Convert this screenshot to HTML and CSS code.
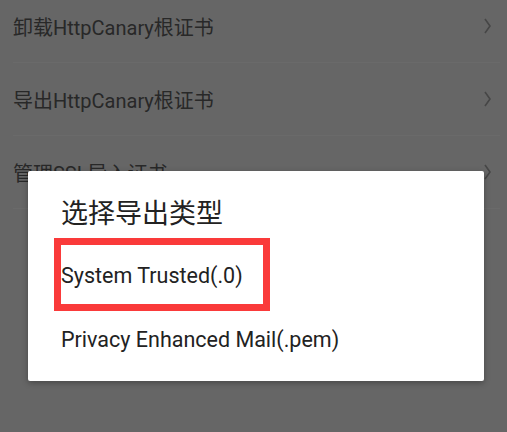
FILE: index.html
```html
<!DOCTYPE html>
<html lang="zh">
<head>
<meta charset="utf-8">
<link rel="stylesheet" href="styles.css">
</head>
<body>
<div class="screen">
  <ul class="menu">
    <li class="row"><span class="label">卸载HttpCanary根证书</span><svg class="chev" width="7" height="16" viewBox="0 0 7 16"><path d="M1 1 L6 8 L1 15" fill="none" stroke="#464646" stroke-width="1.6"/></svg></li>
    <li class="row"><span class="label">导出HttpCanary根证书</span><svg class="chev" width="7" height="16" viewBox="0 0 7 16"><path d="M1 1 L6 8 L1 15" fill="none" stroke="#464646" stroke-width="1.6"/></svg></li>
    <li class="row"><span class="label">管理SSL导入证书</span><svg class="chev" width="7" height="16" viewBox="0 0 7 16"><path d="M1 1 L6 8 L1 15" fill="none" stroke="#464646" stroke-width="1.6"/></svg></li>
  </ul>
  <div class="dialog">
    <div class="title">选择导出类型</div>
    <div class="item">System Trusted(.0)</div>
    <div class="item">Privacy Enhanced Mail(.pem)</div>
    <div class="mark"></div>
  </div>
</div>
</body>
</html>
```
FILE: styles.css
```css
html, body {
  margin: 0;
  padding: 0;
  background: #666666;
}
.screen {
  position: relative;
  width: 507px;
  height: 432px;
  overflow: hidden;
  background: #666666;
}
.menu {
  list-style: none;
  margin: -10px 7px 0 13px;
  padding: 0;
}
.row {
  display: flex;
  align-items: center;
  justify-content: space-between;
  height: 72px;
  border-bottom: 1px solid #6a6a6a;
  padding-right: 9px;
}
.label {
  font-family: Roboto, "Noto Sans CJK SC", sans-serif;
  font-size: 20px;
  color: #282828;
}
.chev {
  display: block;
}
.dialog {
  position: absolute;
  left: 28px;
  top: 171px;
  width: 456px;
  height: 210px;
  background: #ffffff;
  border-radius: 2px;
  box-shadow: 0 2px 6px rgba(0, 0, 0, 0.3);
  box-sizing: border-box;
  padding: 20px 0 0 33px;
}
.title {
  font-family: "Noto Sans CJK SC", "Noto Sans", sans-serif;
  font-size: 27px;
  line-height: 42px;
  color: #222222;
  height: 53px;
}
.item {
  font-family: Roboto, "Noto Sans", sans-serif;
  font-size: 21.5px;
  line-height: 64px;
  height: 64px;
  color: #222222;
}
.mark {
  position: absolute;
  left: 26px;
  top: 67px;
  width: 216px;
  height: 73px;
  box-sizing: border-box;
  border: 7px solid #fa3a3a;
}
```
